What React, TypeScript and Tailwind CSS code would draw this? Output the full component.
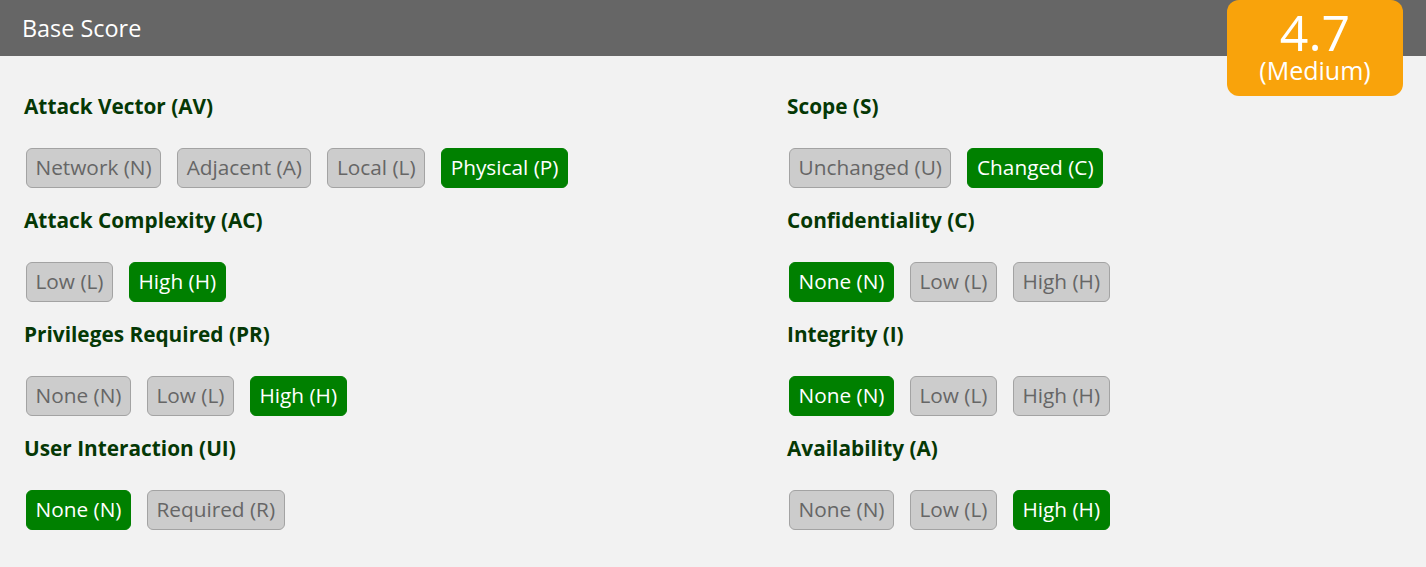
import React from "react";

type Metric = {
    title: string;
    options: string[];
    active: number;
};

const leftMetrics: Metric[] = [
    { title: "Attack Vector (AV)", options: ["Network (N)", "Adjacent (A)", "Local (L)", "Physical (P)"], active: 3 },
    { title: "Attack Complexity (AC)", options: ["Low (L)", "High (H)"], active: 1 },
    { title: "Privileges Required (PR)", options: ["None (N)", "Low (L)", "High (H)"], active: 2 },
    { title: "User Interaction (UI)", options: ["None (N)", "Required (R)"], active: 0 },
];

const rightMetrics: Metric[] = [
    { title: "Scope (S)", options: ["Unchanged (U)", "Changed (C)"], active: 1 },
    { title: "Confidentiality (C)", options: ["None (N)", "Low (L)", "High (H)"], active: 0 },
    { title: "Integrity (I)", options: ["None (N)", "Low (L)", "High (H)"], active: 0 },
    { title: "Availability (A)", options: ["None (N)", "Low (L)", "High (H)"], active: 2 },
];

function MetricGroup({ metric }: { metric: Metric }) {
    return (
        <div className="mb-[19px] flex flex-col">
            <h3 className="text-[20.8px] leading-[27px] font-bold text-[#053805]">{metric.title}</h3>
            <div className="mt-[28px] flex gap-4 pl-[2px]">
                {metric.options.map((opt, i) =>
                    i === metric.active ? (
                        <button
                            key={opt}
                            className="h-10 rounded-[6px] border border-[#008000] bg-[#008000] px-[8.5px] text-[20.8px] text-white"
                        >
                            {opt}
                        </button>
                    ) : (
                        <button
                            key={opt}
                            className="h-10 rounded-[6px] border border-[#a3a3a3] bg-[#cccccc] px-[8.5px] text-[20.8px] text-[#666666]"
                        >
                            {opt}
                        </button>
                    )
                )}
            </div>
        </div>
    );
}

export default function App() {
    return (
        <div className="min-h-[567px] w-[1426px] bg-[#f2f2f2] font-['Open_Sans',sans-serif]">
            {/* Header */}
            <div className="relative h-14 bg-[#666666]">
                <h2 className="pl-[22px] text-[23.4px] leading-[56px] text-white">Base Score</h2>
                <div className="absolute top-0 right-[23px] flex h-[96px] w-[176px] flex-col items-center rounded-[12px] bg-[#f9a30b] text-white">
                    <span className="mt-[8px] text-[50px] leading-[48px]">4.7</span>
                    <span className="mt-px text-[25px] leading-[26px]">(Medium)</span>
                </div>
            </div>

            {/* Metrics */}
            <div className="grid grid-cols-[763px_1fr] px-6 pt-[37px]">
                <div className="flex flex-col">
                    {leftMetrics.map((m) => (
                        <MetricGroup key={m.title} metric={m} />
                    ))}
                </div>
                <div className="flex flex-col">
                    {rightMetrics.map((m) => (
                        <MetricGroup key={m.title} metric={m} />
                    ))}
                </div>
            </div>
        </div>
    );
}
